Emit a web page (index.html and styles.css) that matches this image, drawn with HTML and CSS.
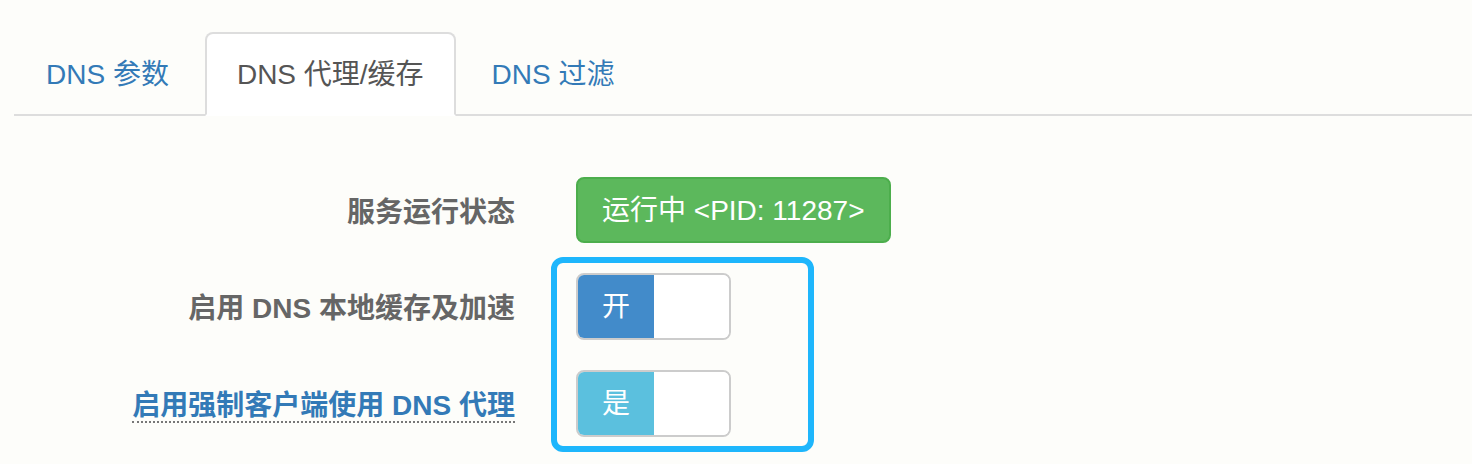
FILE: index.html
```html
<!DOCTYPE html>
<html lang="zh-CN">
<head>
<meta charset="utf-8">
<title>DNS 代理/缓存</title>
<link rel="stylesheet" href="styles.css">
</head>
<body>
<ul class="tabs">
  <li class="tab"><a href="#">DNS 参数</a></li>
  <li class="tab active"><a href="#">DNS 代理/缓存</a></li>
  <li class="tab"><a href="#">DNS 过滤</a></li>
</ul>
<div class="form">
  <div class="row">
    <div class="label">服务运行状态</div>
    <div class="control"><span class="status">运行中 &lt;PID: 11287&gt;</span></div>
  </div>
  <div class="row">
    <div class="label">启用 DNS 本地缓存及加速</div>
    <div class="control">
      <div class="switch"><span class="on primary">开</span><span class="off"></span></div>
    </div>
  </div>
  <div class="row">
    <div class="label"><span class="hint">启用强制客户端使用 DNS 代理</span></div>
    <div class="control">
      <div class="switch"><span class="on info">是</span><span class="off"></span></div>
    </div>
  </div>
  <div class="highlight"></div>
</div>
</body>
</html>
```
FILE: styles.css
```css
* { box-sizing: border-box; }
html, body {
  margin: 0;
  padding: 0;
  background: #fdfdfa;
  font-family: "Liberation Sans", "Noto Sans CJK SC", sans-serif;
  font-size: 28px;
  line-height: 40px;
  color: #333;
}
.tabs {
  list-style: none;
  margin: 32px 0 0 14px;
  padding: 0;
  display: flex;
  border-bottom: 2px solid #ddd;
}
.tab {
  margin-right: 4px;
  margin-bottom: -2px;
}
.tab a {
  display: block;
  padding: 21px 30px 19px;
  border: 2px solid transparent;
  border-radius: 8px 8px 0 0;
  color: #337ab7;
  text-decoration: none;
  line-height: 40px;
}
.tab.active a {
  background: #fff;
  color: #555;
  border-color: #ddd;
  border-bottom-color: transparent;
}
.form {
  position: relative;
  padding-top: 61px;
}
.row {
  display: flex;
  margin-bottom: 30px;
}
.label {
  width: 545px;
  padding: 16px 30px 0 0;
  text-align: right;
  font-weight: bold;
  color: #666;
  line-height: 40px;
}
.hint {
  display: inline-block;
  color: #337ab7;
  line-height: 30px;
  margin-top: 3px;
  border-bottom: 2px dotted #777;
}
.control {
  padding-left: 31px;
}
.status {
  display: inline-block;
  height: 66px;
  padding: 12px 24px 10px;
  background: #5cb85c;
  border: 2px solid #4cae4c;
  border-radius: 8px;
  color: #fff;
  line-height: 40px;
}
.switch {
  display: flex;
  width: 155px;
  height: 67px;
  border: 2px solid #ccc;
  border-radius: 8px;
  overflow: hidden;
  background: #fff;
}
.switch .on {
  width: 76px;
  display: flex;
  align-items: center;
  justify-content: center;
  color: #fff;
}
.switch .on.primary { background: #428bca; }
.switch .on.info { background: #5bc0de; }
.switch .off { flex: 1; background: #fff; }
.highlight {
  position: absolute;
  left: 551px;
  top: 141px;
  width: 263px;
  height: 195px;
  border: 6px solid #1eb6fc;
  border-radius: 12px;
  pointer-events: none;
}
```
